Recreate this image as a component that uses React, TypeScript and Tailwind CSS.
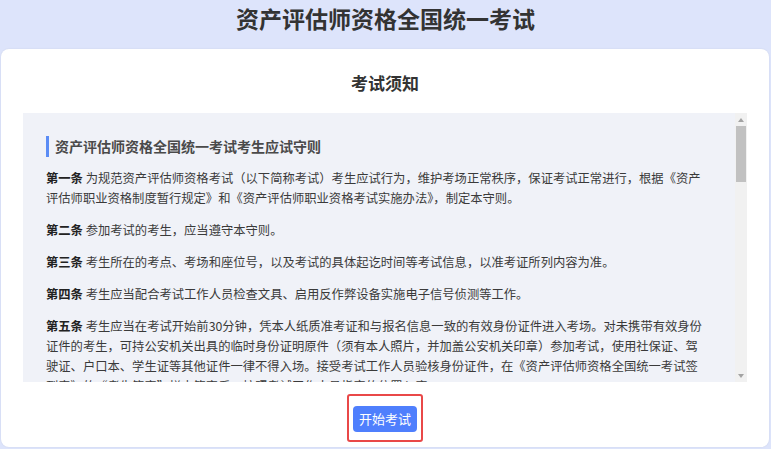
const rules = [
  {
    no: "第一条",
    text: "为规范资产评估师资格考试（以下简称考试）考生应试行为，维护考场正常秩序，保证考试正常进行，根据《资产评估师职业资格制度暂行规定》和《资产评估师职业资格考试实施办法》，制定本守则。",
  },
  { no: "第二条", text: "参加考试的考生，应当遵守本守则。" },
  {
    no: "第三条",
    text: "考生所在的考点、考场和座位号，以及考试的具体起讫时间等考试信息，以准考证所列内容为准。",
  },
  { no: "第四条", text: "考生应当配合考试工作人员检查文具、启用反作弊设备实施电子信号侦测等工作。" },
  {
    no: "第五条",
    text: "考生应当在考试开始前30分钟，凭本人纸质准考证和与报名信息一致的有效身份证件进入考场。对未携带有效身份证件的考生，可持公安机关出具的临时身份证明原件（须有本人照片，并加盖公安机关印章）参加考试，使用社保证、驾驶证、户口本、学生证等其他证件一律不得入场。接受考试工作人员验核身份证件，在《资产评估师资格全国统一考试签到表》的“考生签字”栏中签字后，按照考试工作人员指定的位置入座。",
  },
  {
    no: "第六条",
    text: "考生只准携带必要的文具入场，如黑色墨水笔、2B铅笔、橡皮、无存储和编程功能的计算器等。书籍、资料、笔记本和自备草稿纸以及具有通讯功能的工具等物品不得带入座位，已经带入考场的，应当放在考试工作人员指定的位置。",
  },
  { no: "第七条", text: "考生入座后，应当将准考证、有效身份证件放在桌面左上角，以便考试工作人员核验。" },
  {
    no: "第八条",
    text: "考生领到试卷后，应当在指定位置准确清楚地填写姓名、准考证号等信息。凡漏填、错填或者字迹不清的答卷、答题卡，影响评卷结果的，责任由考生自负。",
  },
  { no: "第九条", text: "考试开始信号发出后，考生方可开始答题。" },
  { no: "第十条", text: "考试开始30分钟后，迟到考生不得入场。考试开始后60分钟内，考生不得交卷退场。" },
  { no: "第十一条", text: "考生应当在试卷、答题卡规定位置作答，在草稿纸或者其他位置作答的一律无效。" },
  {
    no: "第十二条",
    text: "考生在考场内应当保持安静，不得吸烟，不得喧哗，不得交头接耳、左顾右盼、打手势、做暗号，不得夹带、旁窥、抄袭或者有意让他人抄袭，不得传抄答案或者交换试卷、答题卡、草稿纸。",
  },
  {
    no: "第十三条",
    text: "考生在考试期间原则上不得离开考场。确需离开的，须经考试工作人员同意，并由考试工作人员陪同。",
  },
  {
    no: "第十四条",
    text: "考试结束信号发出后，考生应当立即停止答题，将试卷、答题卡、草稿纸整理好放在桌面上，待考试工作人员收齐核对无误后，方可离开考场。",
  },
  { no: "第十五条", text: "考生不得将试卷、答题卡、草稿纸等带出考场。" },
  {
    no: "第十六条",
    text: "考生应当自觉服从考试工作人员管理，不得以任何理由妨碍考试工作人员履行职责，不得扰乱考场及其他考试工作地点的秩序。",
  },
  {
    no: "第十七条",
    text: "考生违反本守则的，按照《专业技术人员资格考试违纪违规行为处理规定》有关规定处理。",
  },
  { no: "第十八条", text: "本守则由中国资产评估协会负责解释。" },
  { no: "第十九条", text: "本守则自发布之日起施行。" },
];

// classic windows-style scrollbar, drawn because the headless page hides real ones
function Scrollbar() {
  return (
    <div className="w-[12px] shrink-0 bg-[#f1f1f1] flex flex-col items-center">
      <div className="h-[13px] flex items-center justify-center">
        <svg width="6" height="4" viewBox="0 0 6 4">
          <path d="M0 4h6L3 0z" fill="#a3a3a3" />
        </svg>
      </div>
      <div className="w-[10px] h-[56px] bg-[#c1c1c1]" />
      <div className="flex-1" />
      <div className="h-[13px] flex items-center justify-center">
        <svg width="6" height="4" viewBox="0 0 6 4">
          <path d="M0 0h6L3 4z" fill="#a3a3a3" />
        </svg>
      </div>
    </div>
  );
}

function App() {
  return (
    <div
      className="h-[449px] w-full flex flex-col bg-[#dde4fb] text-[#333]"
      style={{ fontFamily: '"Noto Sans CJK SC", "Noto Sans", sans-serif' }}>
      <header className="h-[49px] flex justify-center pt-[3px]">
        <h1 className="text-[23px] leading-[30px] font-bold text-[#333]">资产评估师资格全国统一考试</h1>
      </header>

      <main className="flex-1 ml-px mr-[2px] mb-[2px] bg-white rounded-lg shadow-[0_0_2px_rgba(0,0,0,0.08)] px-[22px] flex flex-col">
        <h2 className="pt-[22px] mb-[18px] text-center text-[17px] leading-[24px] font-bold text-[#333]">考试须知</h2>

        <div className="h-[269px] flex bg-[#f0f2f8]">
          <div className="flex-1 overflow-hidden pl-[23px] pr-[29px] pt-[23px]">
            <h3 className="border-l-[3px] border-[#5b8cf5] pl-[6px] text-[14px] leading-[21px] font-bold text-[#4a4a4a] mb-[11px]">
              资产评估师资格全国统一考试考生应试守则
            </h3>
            {rules.map((r) => (
              <p key={r.no} className="mb-3 text-[12.3px] leading-[20px] text-[#3a3a3a]">
                <span className="font-bold text-[#222]">{r.no}</span> {r.text}
              </p>
            ))}
          </div>
          <Scrollbar />
        </div>

        <div className="flex justify-center pt-3">
          <div className="border-2 border-[#e94848] rounded-[3px] px-1 pt-[9px] pb-2">
            <button className="h-[26px] px-[6px] rounded-[4px] bg-[#4f7ffd] text-white text-[13px] leading-[26px]">
              开始考试
            </button>
          </div>
        </div>
      </main>
    </div>
  );
}

export default App;
